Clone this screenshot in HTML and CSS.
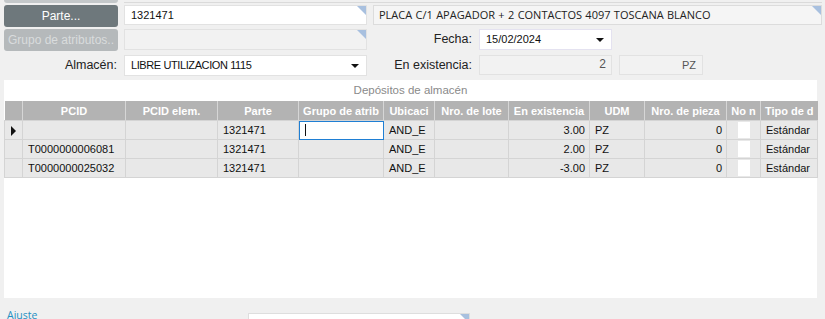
FILE: index.html
```html
<!DOCTYPE html>
<html lang="es">
<head>
  <meta charset="UTF-8" />
  <title>Depósitos de almacén</title>
  <link rel="stylesheet" href="styles.css">
</head>
<body>
  <div class="form">
    <!-- previous row, mostly scrolled out -->
    <div class="row row-cut">
      <div class="cut-btn"></div>
      <div class="cut-field"></div>
    </div>

    <div class="row">
      <button class="btn">Parte...</button>
      <div class="field corner">1321471</div>
      <div class="desc corner">PLACA C/1 APAGADOR + 2 CONTACTOS 4097 TOSCANA BLANCO</div>
    </div>

    <div class="row">
      <button class="btn btn-off">Grupo de atributos..</button>
      <div class="field field-off corner"></div>
      <label class="lbl lbl-mid">Fecha:</label>
      <div class="field field-date">15/02/2024<span class="arrow"></span></div>
    </div>

    <div class="row">
      <label class="lbl lbl-left">Almacén:</label>
      <div class="field field-select">LIBRE UTILIZACION 1115<span class="arrow"></span></div>
      <label class="lbl lbl-mid">En existencia:</label>
      <div class="field field-num">2</div>
      <div class="field field-unit">PZ</div>
    </div>
  </div>

  <section class="panel">
    <div class="panel-title">Depósitos de almacén</div>
    <table class="grid">
      <colgroup>
        <col style="width:18px"><col style="width:103px"><col style="width:92px"><col style="width:81px">
        <col style="width:85px"><col style="width:51px"><col style="width:74px"><col style="width:81px">
        <col style="width:55px"><col style="width:82px"><col style="width:34px"><col style="width:57px">
      </colgroup>
      <thead>
        <tr>
          <th></th>
          <th>PCID</th>
          <th>PCID elem.</th>
          <th>Parte</th>
          <th>Grupo de atrib</th>
          <th>Ubicaci</th>
          <th>Nro. de lote</th>
          <th>En existencia</th>
          <th>UDM</th>
          <th>Nro. de pieza</th>
          <th>No n</th>
          <th>Tipo de d</th>
        </tr>
      </thead>
      <tbody>
        <tr>
          <td class="rowhead"><span class="current"></span></td>
          <td></td>
          <td></td>
          <td>1321471</td>
          <td class="editing"><span class="caret"></span></td>
          <td>AND_E</td>
          <td></td>
          <td class="num">3.00</td>
          <td>PZ</td>
          <td class="num">0</td>
          <td class="chk"><span class="box"></span></td>
          <td>Estándar</td>
        </tr>
        <tr>
          <td class="rowhead"></td>
          <td>T0000000006081</td>
          <td></td>
          <td>1321471</td>
          <td></td>
          <td>AND_E</td>
          <td></td>
          <td class="num">2.00</td>
          <td>PZ</td>
          <td class="num">0</td>
          <td class="chk"><span class="box"></span></td>
          <td>Estándar</td>
        </tr>
        <tr>
          <td class="rowhead"></td>
          <td>T0000000025032</td>
          <td></td>
          <td>1321471</td>
          <td></td>
          <td>AND_E</td>
          <td></td>
          <td class="num">-3.00</td>
          <td>PZ</td>
          <td class="num">0</td>
          <td class="chk"><span class="box"></span></td>
          <td>Estándar</td>
        </tr>
      </tbody>
    </table>
  </section>

  <div class="bottom">
    <span class="ajuste">Ajuste</span>
    <div class="field bottom-field corner"></div>
  </div>
</body>
</html>
```

FILE: styles.css
```css
body {
  margin: 0;
  width: 825px;
  height: 319px;
  overflow: hidden;
  background: #f0f0f0;
  font-family: "Liberation Sans", Arial, sans-serif;
  font-size: 12px;
  color: #111;
}

.form {
  padding-left: 4px;
}

.row {
  display: flex;
  align-items: flex-start;
  gap: 6px;
  margin-bottom: 2px;
}

.row + .row + .row + .row {
  margin-top: 4px;
}

.row-cut {
  height: 3px;
  margin-bottom: 2px;
}

.cut-btn {
  width: 114px;
  height: 3px;
  background: #c4c8ca;
  border-radius: 0 0 3px 3px;
}

.cut-field {
  width: 698px;
  height: 2px;
  border-bottom: 1px solid #dadada;
}

.btn {
  width: 114px;
  height: 22px;
  border: none;
  border-radius: 3px;
  background: #6e787c;
  color: #fff;
  font-family: "Liberation Sans", Arial, sans-serif;
  font-size: 12px;
  padding: 0;
}

.btn-off {
  background: #b5b9bb;
  color: #d9dcdd;
}

.field {
  position: relative;
  box-sizing: border-box;
  width: 243px;
  height: 21px;
  line-height: 19px;
  padding: 0 6px;
  background: #fff;
  border: 1px solid #e2e2e2;
  font-size: 11px;
  white-space: nowrap;
}

.row:nth-child(2) .field {
  height: 20px;
  line-height: 18px;
}

.field-off {
  background: #f2f2f2;
}

.field-select {
  letter-spacing: -0.4px;
}

.corner::after {
  content: "";
  position: absolute;
  top: 0;
  right: 0;
  border-top: 9px solid #a8c0df;
  border-left: 9px solid transparent;
}

.desc {
  position: relative;
  box-sizing: border-box;
  flex: 1;
  margin-right: 3px;
  height: 20px;
  line-height: 18px;
  padding: 0 5px;
  background: #f5f5f5;
  border: 1px solid #dcdcdc;
  font-family: "Open Sans", sans-serif;
  font-size: 11px;
  word-spacing: 0.5px;
  color: #222;
  white-space: nowrap;
}

.arrow {
  position: absolute;
  right: 7px;
  top: 8px;
  border-top: 4px solid #111;
  border-left: 4px solid transparent;
  border-right: 4px solid transparent;
}

.lbl {
  box-sizing: border-box;
  height: 21px;
  line-height: 21px;
  text-align: right;
  font-size: 12.5px;
  color: #222;
}

.lbl-left {
  width: 114px;
  padding-right: 1px;
}

.lbl-mid {
  width: 99px;
  margin-right: 1px;
}

.field-date {
  width: 133px;
  border-color: #e4e2f0;
}

.field-num {
  width: 133px;
  height: 20px;
  background: #f2f2f2;
  text-align: right;
  font-size: 12px;
  color: #555;
  line-height: 16px;
  padding-right: 5px;
}

.field-unit {
  width: 84px;
  height: 20px;
  margin-left: 1px;
  background: #f2f2f2;
  text-align: right;
  color: #555;
  padding-right: 6px;
}

.panel {
  margin: 4px 8px 0 4px;
  height: 218px;
  background: #fff;
}

.panel-title {
  height: 21px;
  line-height: 21px;
  text-align: center;
  font-size: 11.5px;
  color: #8a8a8a;
}

.grid {
  width: 813px;
  table-layout: fixed;
  border-collapse: collapse;
  font-size: 11px;
}

.grid th {
  height: 19px;
  padding: 0 3px;
  background: #b3b3b3;
  color: #fff;
  font-weight: bold;
  text-align: center;
  white-space: nowrap;
  overflow: hidden;
  border-left: 1px solid #d6d6d6;
}

.grid th:first-child {
  border-left: none;
}

.grid td {
  height: 18px;
  padding: 0 5px;
  background: #e8e8e8;
  border: 1px solid #d4d4d4;
  white-space: nowrap;
  overflow: hidden;
}

.grid td.num {
  text-align: right;
  padding-right: 4px;
}

.grid td.rowhead {
  position: relative;
  padding: 0;
}

.current {
  position: absolute;
  left: 6px;
  top: 5px;
  border-left: 5px solid #111;
  border-top: 5px solid transparent;
  border-bottom: 5px solid transparent;
}

.grid td.editing {
  position: relative;
  background: #fff;
  outline: 1px solid #1f7fd4;
  outline-offset: -1px;
}

.caret {
  position: absolute;
  left: 6px;
  top: 3px;
  width: 1px;
  height: 12px;
  background: #111;
}

.grid td.chk {
  padding: 0;
  text-align: center;
}

.box {
  display: inline-block;
  width: 12px;
  height: 16px;
  vertical-align: middle;
  background: #fff;
}

.bottom {
  display: flex;
  align-items: flex-start;
  padding-left: 7px;
  margin-top: 7px;
}

.ajuste {
  width: 241px;
  margin-top: 3px;
  font-family: "Open Sans", sans-serif;
  font-size: 10.5px;
  color: #1f8fc2;
  line-height: 14px;
}

.bottom-field {
  width: 222px;
  margin-top: 8px;
  border-color: #dedede;
}
```
